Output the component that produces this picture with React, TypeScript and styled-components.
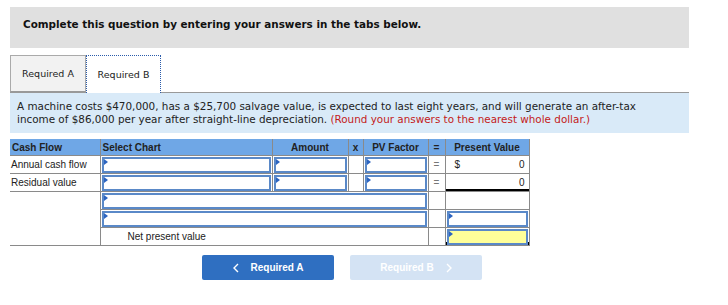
import styled, { createGlobalStyle } from 'styled-components';

const GlobalStyle = createGlobalStyle`
  body {
    margin: 0;
    background: #fff;
  }
`;

const Page = styled.div`
  width: 679px;
  padding: 7px 0 0 10px;
`;

const Banner = styled.div`
  height: 41px;
  box-sizing: border-box;
  padding: 11px 0 0 13px;
  background: #e0e0e0;
  font-family: "DejaVu Sans", Verdana, sans-serif;
  font-weight: bold;
  font-size: 10.4px;
  color: #111;
`;

const TabBar = styled.div`
  display: flex;
  margin-top: 7px;
  border-bottom: 1px solid #999;
`;

const Tab = styled.div<{ $active?: boolean }>`
  display: flex;
  align-items: center;
  justify-content: center;
  box-sizing: border-box;
  height: ${(p) => (p.$active ? '38px' : '37px')};
  width: ${(p) => (p.$active ? '75px' : '76px')};
  margin-bottom: ${(p) => (p.$active ? '-1px' : '0')};
  background: ${(p) => (p.$active ? '#fff' : '#f2f2f2')};
  border: ${(p) => (p.$active ? '1px dotted #2a5bab' : '1px solid #aaa')};
  border-bottom: ${(p) => (p.$active ? 'none' : '1px solid #999')};
  font-family: "DejaVu Sans", Verdana, sans-serif;
  font-size: 9.5px;
  color: #222;
`;

const Info = styled.div`
  background: #d9eaf8;
  padding: 7px 7px;
  font-family: "DejaVu Sans", Verdana, sans-serif;
  font-size: 10.4px;
  line-height: 13px;
  color: #222;
  white-space: nowrap;
`;

const Note = styled.span`
  color: #c41a1a;
`;

const Grid = styled.table`
  margin-top: 6px;
  width: 519px;
  border-collapse: collapse;
  table-layout: fixed;
  font-family: "Liberation Sans", Arial, sans-serif;
  font-size: 10px;
  color: #222;
`;

const Head = styled.th<{ $align?: string }>`
  height: 16px;
  padding: 0 2px;
  background: #6fa7e6;
  border: 1px solid #8a8a8a;
  border-top: none;
  text-align: ${(p) => p.$align || 'center'};
  font-weight: bold;
  &:first-child {
    border-left: none;
  }
`;

const Cell = styled.td<{ $align?: string; $indent?: number; $rule?: number }>`
  height: 17px;
  padding: 0 ${(p) => (p.$align === 'right' ? 4 : 1)}px 0 ${(p) => p.$indent ?? 1}px;
  border: 1px solid #8a8a8a;
  ${(p) => (p.$rule ? `box-shadow: inset 0 -${p.$rule}px #000;` : '')}
  text-align: ${(p) => p.$align || 'left'};
  color: ${(p) => (p.$align === 'center' ? '#777' : '#222')};
  vertical-align: middle;
  &:first-child {
    border-left: none;
  }
`;

const Field = styled.div<{ $fill?: string }>`
  position: relative;
  box-sizing: border-box;
  height: 16px;
  border: 2px solid #5a89c8;
  background: ${(p) => p.$fill || '#fff'};
  &::before {
    content: '';
    position: absolute;
    top: 0;
    left: 0;
    border-top: 3px solid transparent;
    border-bottom: 3px solid transparent;
    border-left: 4px solid #2c64c0;
  }
`;

const Money = styled.div`
  display: flex;
  justify-content: space-between;
  padding-left: 8px;
`;

const Actions = styled.div`
  display: flex;
  gap: 16px;
  margin: 9px 0 0 192px;
`;

const NavButton = styled.button<{ $disabled?: boolean }>`
  display: flex;
  align-items: center;
  justify-content: center;
  gap: 12px;
  width: 132px;
  height: 25px;
  padding: 0;
  border: none;
  border-radius: 2px;
  background: ${(p) => (p.$disabled ? '#d4e3f4' : '#2f6fc1')};
  color: #fff;
  font-family: "Liberation Sans", Arial, sans-serif;
  font-weight: bold;
  font-size: 10px;
`;

const Chevron = ({ dir }: { dir: 'left' | 'right' }) => (
  <svg width="6" height="10" viewBox="0 0 6 10">
    <path
      d={dir === 'left' ? 'M5 1 L1 5 L5 9' : 'M1 1 L5 5 L1 9'}
      fill="none"
      stroke="#fff"
      strokeWidth="1.4"
    />
  </svg>
);

export default function App() {
  return (
    <Page>
      <GlobalStyle />
      <Banner>Complete this question by entering your answers in the tabs below.</Banner>
      <TabBar>
        <Tab>Required A</Tab>
        <Tab $active>Required B</Tab>
      </TabBar>
      <Info>
        A machine costs $470,000, has a $25,700 salvage value, is expected to last eight years, and will generate an after-tax
        <br />
        income of $86,000 per year after straight-line depreciation. <Note>(Round your answers to the nearest whole dollar.)</Note>
      </Info>
      <Grid>
        <colgroup>
          <col style={{ width: 90 }} />
          <col style={{ width: 172 }} />
          <col style={{ width: 76 }} />
          <col style={{ width: 15 }} />
          <col style={{ width: 65 }} />
          <col style={{ width: 17 }} />
          <col style={{ width: 84 }} />
        </colgroup>
        <thead>
          <tr>
            <Head $align="left">Cash Flow</Head>
            <Head $align="left">Select Chart</Head>
            <Head>Amount</Head>
            <Head>x</Head>
            <Head>PV Factor</Head>
            <Head>=</Head>
            <Head>Present Value</Head>
          </tr>
        </thead>
        <tbody>
          <tr>
            <Cell>Annual cash flow</Cell>
            <Cell><Field /></Cell>
            <Cell><Field /></Cell>
            <Cell />
            <Cell><Field /></Cell>
            <Cell $align="center">=</Cell>
            <Cell $align="right">
              <Money><span>$</span><span>0</span></Money>
            </Cell>
          </tr>
          <tr>
            <Cell>Residual value</Cell>
            <Cell><Field /></Cell>
            <Cell><Field /></Cell>
            <Cell />
            <Cell><Field /></Cell>
            <Cell $align="center">=</Cell>
            <Cell $align="right" $rule={2}>0</Cell>
          </tr>
          <tr>
            <Cell rowSpan={3} />
            <Cell colSpan={4}><Field /></Cell>
            <Cell />
            <Cell />
          </tr>
          <tr>
            <Cell colSpan={4}><Field /></Cell>
            <Cell />
            <Cell><Field /></Cell>
          </tr>
          <tr>
            <Cell colSpan={4} $indent={27}>Net present value</Cell>
            <Cell />
            <Cell $rule={3}><Field $fill="#ffff99" /></Cell>
          </tr>
        </tbody>
      </Grid>
      <Actions>
        <NavButton>
          <Chevron dir="left" />
          Required A
        </NavButton>
        <NavButton $disabled>
          Required B
          <Chevron dir="right" />
        </NavButton>
      </Actions>
    </Page>
  );
}
